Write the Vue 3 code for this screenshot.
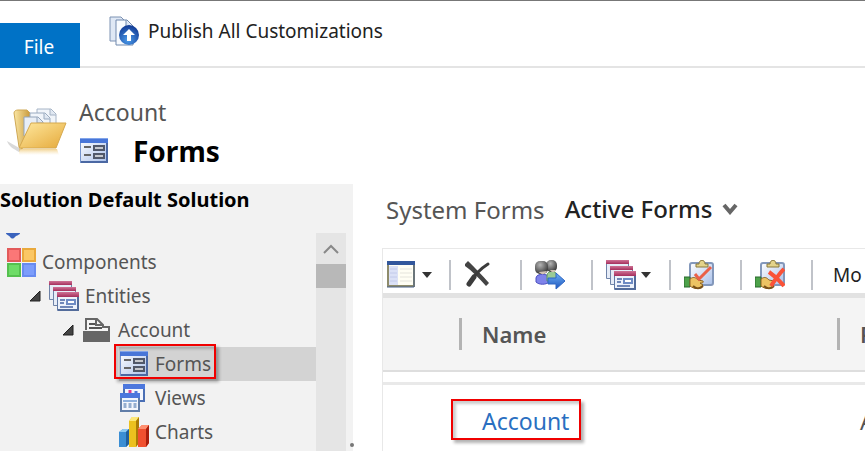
<script setup>
const tree = [
  { label: 'Components', icon: 'components', level: 0, expand: false },
  { label: 'Entities', icon: 'entities', level: 1, expand: true },
  { label: 'Account', icon: 'account', level: 2, expand: true },
  { label: 'Forms', icon: 'form', level: 3, selected: true },
  { label: 'Views', icon: 'views', level: 3 },
  { label: 'Charts', icon: 'charts', level: 3 },
]

const tools = [
  { name: 'Choose view', icon: 'layout', menu: true, cls: 'first' },
  { name: 'Delete', icon: 'delete', cls: '' },
  { name: 'Assign roles', icon: 'people', cls: '' },
  { name: 'Form order', icon: 'entities', menu: true, cls: 'wide' },
  { name: 'Activate', icon: 'activate', cls: '' },
  { name: 'Deactivate', icon: 'deactivate', cls: '' },
]
</script>

<template>
  <div class="page">
    <svg class="defs" aria-hidden="true">
      <defs>
        <linearGradient id="gBlue" x1="0" y1="0" x2="1" y2="1">
          <stop offset="0" stop-color="#7fa9f0" /><stop offset="1" stop-color="#2450a8" />
        </linearGradient>
        <linearGradient id="gPane" x1="0" y1="0" x2="1" y2="1">
          <stop offset="0" stop-color="#ffffff" /><stop offset="1" stop-color="#a9c0ea" />
        </linearGradient>
        <linearGradient id="gWine" x1="0" y1="0" x2="0" y2="1">
          <stop offset="0" stop-color="#cf7396" /><stop offset="1" stop-color="#a52e5c" />
        </linearGradient>
        <linearGradient id="gFolder" x1="0" y1="0" x2="1" y2="1">
          <stop offset="0" stop-color="#ffe9a0" /><stop offset="1" stop-color="#e5a93a" />
        </linearGradient>
        <linearGradient id="gBack" x1="0" y1="0" x2="1" y2="0">
          <stop offset="0" stop-color="#fbe7a4" /><stop offset="1" stop-color="#c99a3c" />
        </linearGradient>
        <linearGradient id="gFade" x1="0" y1="0" x2="0" y2="1">
          <stop offset="0" stop-color="#e9b64c" stop-opacity=".6" /><stop offset="1" stop-color="#f4d48a" stop-opacity="0" />
        </linearGradient>
        <radialGradient id="gBall" cx=".45" cy=".75" r=".7">
          <stop offset="0" stop-color="#4b9bea" /><stop offset="1" stop-color="#143f99" />
        </radialGradient>
        <radialGradient id="gHead" cx=".4" cy=".3" r=".7">
          <stop offset="0" stop-color="#b5b5b5" /><stop offset="1" stop-color="#3c3c3c" />
        </radialGradient>
        <linearGradient id="gArrow" x1="0" y1="0" x2="0" y2="1">
          <stop offset="0" stop-color="#6fb1f7" /><stop offset="1" stop-color="#1c55bd" />
        </linearGradient>

        <symbol id="form" viewBox="0 0 30 30">
          <rect x="1.500" y="2.500" width="27" height="24" fill="url(#gPane)" stroke="#7694cc" />
          <rect x="1" y="2" width="28" height="5" fill="#4876d8" />
          <rect x="1" y="2" width="28" height="1" fill="#82a5ea" />
          <path d="M28 7v19H2" fill="none" stroke="#4b68a3" stroke-width="2" />
          <path d="M5 11h7M5 19h7" stroke="#666" stroke-width="2" />
          <rect x="15" y="10" width="10" height="4" fill="#c5c8ce" stroke="#50586a" stroke-width="2" />
          <rect x="15" y="18" width="10" height="4" fill="#c5c8ce" stroke="#50586a" stroke-width="2" />
        </symbol>

        <symbol id="components" viewBox="0 0 30 30">
          <rect x="2" y="2" width="12" height="12" fill="#fb7777" stroke="#e25a5a" stroke-width="2" />
          <rect x="17" y="2" width="12" height="12" fill="#fbc765" stroke="#e9a93c" stroke-width="2" />
          <rect x="2" y="17" width="12" height="12" fill="#6edc67" stroke="#55c04f" stroke-width="2" />
          <rect x="17" y="17" width="12" height="12" fill="#7c9dfb" stroke="#688bf0" stroke-width="2" />
        </symbol>

        <symbol id="entities" viewBox="0 0 30 30">
          <path d="M.5.5h22v18H.5z" fill="#e6ecf7" stroke="#6f83a8" />
          <path d="M0 0h23v4H0z" fill="url(#gWine)" />
          <path d="M4.500 6.500h22v18h-22z" fill="#e6ecf7" stroke="#6f83a8" />
          <path d="M4 6h23v4H4z" fill="url(#gWine)" />
          <path d="M8.500 12.500h21v17h-21z" fill="#edf2fb" stroke="#6079a5" />
          <path d="M8 11h22v5H8z" fill="url(#gWine)" />
          <path d="M29 16v13H9" fill="none" stroke="#536c9b" stroke-width="2" />
          <path d="M11 19h5M11 22h4M11 26h13" stroke="#7087b8" stroke-width="2" />
          <rect x="18" y="19" width="8" height="4" fill="#fff" stroke="#6e8bc4" stroke-width="2" />
        </symbol>

        <symbol id="account" viewBox="0 0 30 30">
          <path d="M4 15V4h11l6 6v2h6v4" fill="#f5f5f5" stroke="#666" stroke-width="2" />
          <path d="M14 4v6h7" fill="none" stroke="#666" stroke-width="2" />
          <path d="M7 9h6M7 13h13" stroke="#555" stroke-width="2" />
          <path d="M1 16h27v11H1z" fill="#666" />
        </symbol>

        <symbol id="views" viewBox="0 0 30 30">
          <rect x="5" y="2" width="20" height="16" fill="#f3f6fd" stroke="#4a6fb5" stroke-width="2" />
          <path d="M4 1h22v5H4z" fill="#4c77dd" />
          <path d="M11 7v5" stroke="#dc3d92" stroke-width="3" /><path d="M17 8v5" stroke="#4c77dd" stroke-width="3" />
          <rect x="2" y="12" width="18" height="16" fill="#f2f6fd" stroke="#607da8" stroke-width="2" />
          <path d="M1 10h20v5H1z" fill="#4c77dd" />
          <path d="M4 18h14" stroke="#8db0dd" stroke-width="2" />
          <path d="M6 20v5M11 20v5M16 20v5" stroke="#94aed0" stroke-width="3" />
        </symbol>

        <symbol id="charts" viewBox="0 0 30 30">
          <path d="M0 15l4-3h6v15l-3 3H0z" fill="#3b8ed4" /><path d="M0 15l4-3h6l-3 3z" fill="#8cc8f0" /><path d="M7 15l3-3v15l-3 3z" fill="#205f9d" />
          <path d="M10 4l3-4h7v26l-3 4h-7z" fill="#ecc11f" /><path d="M10 4l3-4h7l-3 4z" fill="#fce779" /><path d="M17 4l3-4v26l-3 4z" fill="#ab7b06" />
          <path d="M19 12l4-4h7v18l-3 4h-8z" fill="#f0502f" /><path d="M19 12l4-4h7l-3 4z" fill="#ff8f70" /><path d="M27 12l3-4v18l-3 4z" fill="#a91e0c" />
        </symbol>

        <symbol id="layout" viewBox="0 0 30 30">
          <rect x="1" y="3" width="26" height="23" fill="#fffef4" stroke="#8e8b6b" stroke-width="2" />
          <path d="M0 1h28v4H0z" fill="#32579c" />
          <path d="M2 6h9v19H2z" fill="#dbe1f6" />
          <path d="M3 9h7M3 13h7M3 17h7M3 21h7" stroke="#c2caea" />
          <path d="M13 9h12M13 13h12M13 17h12M13 21h12" stroke="#e5e4dc" />
          <path d="M27 5v22H0" fill="none" stroke="#48608a" stroke-width="1" />
        </symbol>

        <symbol id="delete" viewBox="0 0 30 30">
          <path d="M1 4l3-3C10 7 18 15 25 23l-3 3C15 18 8 11 1 6z" fill="#444" />
          <path d="M24 4C16 9 9 17 5 24" fill="none" stroke="#3c3c3c" stroke-width="3" stroke-linecap="round" />
          <path d="M10 17L5 24" fill="none" stroke="#3c3c3c" stroke-width="5" stroke-linecap="round" />
        </symbol>

        <symbol id="people" viewBox="0 0 30 30">
          <path d="M1 18c0-5 13-5 13 0v4c-3 3-10 3-13 0z" fill="#7f83ea" stroke="#4c4fc0" />
          <path d="M12 15c1-5 9-5 10 0v6H12z" fill="#9bcb94" stroke="#5d965a" />
          <rect x="11" y="0" width="11" height="12" rx="5" fill="url(#gHead)" />
          <rect x="0" y="1" width="13" height="13" rx="5" fill="url(#gHead)" />
          <path d="M4 12c2 3 6 3 8-1z" fill="#d3c2b4" />
          <path d="M15 10c2 3 4 3 6 0z" fill="#d3c2b4" />
          <path d="M13 18h8v-5l9 8-9 8v-5h-8z" fill="url(#gArrow)" stroke="#2f66c4" />
        </symbol>

        <symbol id="clip" viewBox="0 0 30 30">
          <rect x="6" y="3" width="23" height="22" rx="2" fill="url(#gPane)" stroke="#8398bb" stroke-width="2" />
          <path d="M12 7V4h3c0-5 6-5 6 0h3v3z" fill="#e3d38a" stroke="#89783b" />
          <path d="M0 17h6v10H0z" fill="#4da24a" stroke="#28692d" />
          <path d="M6 19c4-3 6-1 8 1l5 1c1 2-1 2-3 2l3 2c-4 5-9 4-13 1z" fill="#ecc363" stroke="#8b6124" />
          <path d="M9 26c3 3 7 3 10 0" fill="none" stroke="#7a5118" stroke-width="2" />
        </symbol>
        <symbol id="activate" viewBox="0 0 30 30">
          <use href="#clip" width="30" height="30" />
          <path d="M11 14l4 5L27 7" fill="none" stroke="#ea6048" stroke-width="3" />
        </symbol>
        <symbol id="deactivate" viewBox="0 0 30 30">
          <use href="#clip" width="30" height="30" />
          <path d="M14 12c6 4 11 9 15 14M29 9c-5 5-9 11-13 17" fill="none" stroke="#fa5238" stroke-width="4" />
        </symbol>
      </defs>
    </svg>

    <header class="ribbon">
      <button class="file" type="button">File</button>
      <button class="publish" type="button">
        <svg class="icon" viewBox="0 0 30 30" aria-hidden="true">
          <path d="M1 1h11l4 4v20H1z" fill="#dfe8f5" stroke="#7d92b3" />
          <path d="M7 4h11l6 6v19H7z" fill="#f8fbff" stroke="#7189ad" />
          <path d="M17 4v7h7" fill="#dbe6f5" stroke="#7189ad" />
          <circle cx="20" cy="19" r="10" fill="url(#gBall)" />
          <path d="M20 13l6 6h-4v6h-4v-6h-4z" fill="#fff" />
        </svg>
        <span>Publish All Customizations</span>
      </button>
    </header>

    <section class="heading">
      <svg class="folder" viewBox="0 0 60 50" aria-hidden="true">
        <path d="M0 34l14 8-2 3C7 42 2 40 0 34z" fill="#d9d9d9" />
        <path d="M7 6c0-2 2-3 4-3h9l3 3v10l-8 26-3-2z" fill="url(#gBack)" stroke="#cfa855" />
        <path d="M30 2h14l5 5v14H30z" fill="#f1f5fa" stroke="#a6b4c6" />
        <path d="M43 2v6h6" fill="#dfe7f1" stroke="#a6b4c6" />
        <path d="M23 6h15l5 5v12H23z" fill="#f1f5fa" stroke="#9aabc0" />
        <path d="M37 6v6h6" fill="#dfe7f1" stroke="#9aabc0" />
        <path d="M17 10h14l5 5v14H17z" fill="#e8eef6" stroke="#93a4ba" />
        <path d="M30 10v6h6" fill="#dfe7f1" stroke="#93a4ba" />
        <path d="M24 16h35L49 41H12z" fill="url(#gFolder)" stroke="#d6a94e" />
        <path d="M12 42h38l2 6H12z" fill="url(#gFade)" />
      </svg>
      <div class="titles">
        <div class="entity">Account</div>
        <div class="title-row">
          <svg class="icon" aria-hidden="true"><use href="#form" /></svg>
          <h1>Forms</h1>
        </div>
      </div>
    </section>

    <div class="body">
      <aside class="sidebar">
        <h2>Solution Default Solution</h2>
        <div class="scroller">
          <nav class="tree" aria-label="Solution">
            <svg class="cut" viewBox="0 0 14 6" aria-hidden="true"><path d="M0 0h14c0 2-3 2-5 4-2 2-3 2-5 0C3 2 0 2 0 0z" fill="#3a63bd" /></svg>
            <a v-for="n in tree" :key="n.label" href="#" class="node" :class="['level-' + n.level, { selected: n.selected }]">
              <svg v-if="n.expand" class="twist" viewBox="0 0 12 12" aria-hidden="true"><path d="M11 1v10H1z" fill="#444" stroke="#222" /></svg>
              <svg class="icon" aria-hidden="true"><use :href="'#' + n.icon" /></svg>
              <span>{{ n.label }}</span>
              <i v-if="n.selected" class="mark"></i>
            </a>
          </nav>
          <div class="bar">
            <button type="button" class="up" aria-label="Scroll up">
              <svg viewBox="0 0 16 10" aria-hidden="true"><path d="M1 9l7-7 7 7" fill="none" stroke="#888" stroke-width="2" /></svg>
            </button>
            <div class="thumb"></div>
          </div>
          <div class="grip"></div>
        </div>
      </aside>

      <main class="content">
        <div class="picker">
          <span class="kind">System Forms</span>
          <button type="button" class="view">
            Active Forms
            <svg viewBox="0 0 16 12" aria-hidden="true"><path d="M2 2l6 7 6-7" fill="none" stroke="#666" stroke-width="4" /></svg>
          </button>
        </div>
        <div class="grid">
          <div class="toolbar">
            <button v-for="t in tools" :key="t.name" type="button" :class="['tool', t.cls]" :aria-label="t.name">
              <svg class="icon" aria-hidden="true"><use :href="'#' + t.icon" /></svg>
              <svg v-if="t.menu" class="caret" viewBox="0 0 10 6" aria-hidden="true"><path d="M0 0h10L5 6z" fill="#333" /></svg>
            </button>
            <button type="button" class="more">Mo</button>
          </div>
          <table>
            <thead>
              <tr>
                <th class="check"></th>
                <th class="name"><span>Name</span></th>
                <th><span>F</span></th>
              </tr>
            </thead>
            <tbody>
              <tr>
                <td></td>
                <td class="linked"><a href="#">Account</a></td>
                <td class="type">A</td>
              </tr>
            </tbody>
          </table>
        </div>
      </main>
    </div>
  </div>
</template>

<style>
body {
  margin: 0;
  background: #fff;
}
</style>

<style scoped>
.page {
  height: 100vh;
  box-sizing: border-box;
  display: flex;
  flex-direction: column;
  overflow: hidden;
  border-top: 1px solid #777;
  font-family: "Noto Sans", "Open Sans", sans-serif;
  font-size: 19px;
  color: #555;
}
.defs {
  position: absolute;
  width: 0;
  height: 0;
}
button {
  border: 0;
  padding: 0;
  background: none;
  font: inherit;
  color: inherit;
}
a {
  color: inherit;
  text-decoration: none;
}
svg {
  display: block;
  flex: none;
}
.icon {
  width: 30px;
  height: 30px;
}
.ribbon {
  display: flex;
  height: 67px;
  flex: none;
  box-sizing: border-box;
  background: linear-gradient(#e4e4e4, #e4e4e4) bottom / 100% 2px no-repeat;
}
.file {
  width: 80px;
  margin-top: 22px;
  padding-right: 2px;
  padding-top: 2px;
  background: #0072c6;
  color: #fff;
}
.publish {
  display: flex;
  align-items: center;
  gap: 9px;
  height: 60px;
  padding-left: 29px;
  color: #222;
  white-space: nowrap;
}
.heading {
  display: flex;
  flex: none;
  height: 116px;
  box-sizing: border-box;
  padding: 29px 0 0 7px;
}
.folder {
  width: 60px;
  height: 50px;
  margin-top: 10px;
}
.titles {
  padding-left: 12px;
}
.entity {
  font-size: 23px;
  line-height: 30px;
}
.title-row {
  display: flex;
  align-items: center;
  gap: 24px;
  height: 48px;
}
h1 {
  margin: 0;
  font-size: 28px;
  line-height: 46px;
  color: #000;
}
.body {
  display: flex;
  flex: 1;
  min-height: 0;
}
.sidebar {
  display: flex;
  flex-direction: column;
  flex: none;
  width: 353px;
  background: #f2f2f2;
}
h2 {
  margin: 0;
  font-size: 20px;
  line-height: 32px;
  height: 49px;
  flex: none;
  color: #000;
  white-space: nowrap;
}
.scroller {
  display: flex;
  flex: 1;
  min-height: 0;
}
.tree {
  flex: 1;
  overflow: hidden;
}
.cut {
  width: 14px;
  height: 6px;
  margin: 0 0 6px 6px;
}
.node {
  position: relative;
  display: flex;
  align-items: center;
  gap: 6px;
  height: 34px;
}
.level-0 { padding-left: 6px; }
.level-1 { padding-left: 29px; }
.level-2 { padding-left: 62px; }
.level-3 { margin-left: 119px; }
.selected {
  background: #d3d3d3;
}
.twist {
  width: 12px;
  height: 12px;
  margin-right: 2px;
}
.mark {
  position: absolute;
  border: 2px solid #f00000;
  box-shadow: 3px 3px 3px rgba(0, 0, 0, 0.3), inset 3px 3px 3px rgba(0, 0, 0, 0.2);
  left: -5px;
  top: -3px;
  width: 98px;
  height: 31px;
}
.bar {
  width: 30px;
  flex: none;
  background: #e5e5e5;
}
.up {
  display: flex;
  justify-content: center;
  align-items: center;
  width: 100%;
  height: 31px;
}
.up svg {
  width: 16px;
  height: 10px;
}
.thumb {
  height: 24px;
  background: #b8b8b8;
}
.grip {
  flex: none;
  align-self: flex-end;
  width: 3px;
  height: 8px;
  margin-left: 4px;
  border-top: 4px dotted #777;
  box-sizing: border-box;
}
.content {
  flex: 1;
  min-width: 0;
  display: flex;
  flex-direction: column;
  padding-left: 29px;
}
.picker {
  display: flex;
  height: 64px;
  flex: none;
  padding-left: 4px;
  gap: 20px;
  font-size: 24px;
  line-height: 52px;
  white-space: nowrap;
}
.view {
  display: flex;
  align-items: center;
  gap: 10px;
  height: 49px;
  color: #222;
  font-weight: 500;
}
.view svg {
  width: 16px;
  height: 12px;
}
.grid {
  flex: 1;
  border: 1px solid #e8e8e8;
  border-width: 1px 0 0 1px;
  overflow: hidden;
}
.toolbar {
  display: flex;
  align-items: center;
  height: 49px;
  box-sizing: border-box;
  border-bottom: 5px solid #e2e2e2;
}
.tool {
  display: flex;
  align-items: center;
  flex: none;
  gap: 5px;
  width: 71px;
  height: 30px;
  margin-top: 12px;
  padding-left: 13px;
  border-right: 2px solid #c0c3c9;
  box-sizing: border-box;
  margin-bottom: 4px;
}
.first {
  width: 68px;
  padding-left: 4px;
}
.wide {
  width: 78px;
}
.caret {
  width: 10px;
  height: 6px;
}
.more {
  margin: 8px 0 0 20px;
  color: #222;
}
table {
  width: 100%;
  table-layout: fixed;
  border-collapse: collapse;
}
th {
  height: 72px;
  padding: 0;
  background: #f4f4f4;
  border-bottom: 2px solid #dedede;
  font-size: 22px;
  font-weight: 600;
  text-align: left;
}
th span {
  display: block;
  border-left: 3px solid #b3b3b3;
  padding-left: 20px;
  line-height: 32px;
}
.check {
  width: 76px;
}
.name {
  width: 378px;
}
tbody::before {
  content: "";
  display: table-row;
  height: 12px;
}
td {
  height: 72px;
  padding: 0 0 0 23px;
  border-top: 3px solid #e9e9e9;
  font-size: 23px;
}
.linked a {
  position: relative;
  color: #2a6fc1;
}
.linked a::before {
  content: "";
  position: absolute;
  border: 2px solid #f00000;
  box-shadow: 3px 3px 3px rgba(0, 0, 0, 0.3), inset 3px 3px 3px rgba(0, 0, 0, 0.2);
  left: -31px;
  top: -6px;
  width: 126px;
  height: 37px;
}
</style>
